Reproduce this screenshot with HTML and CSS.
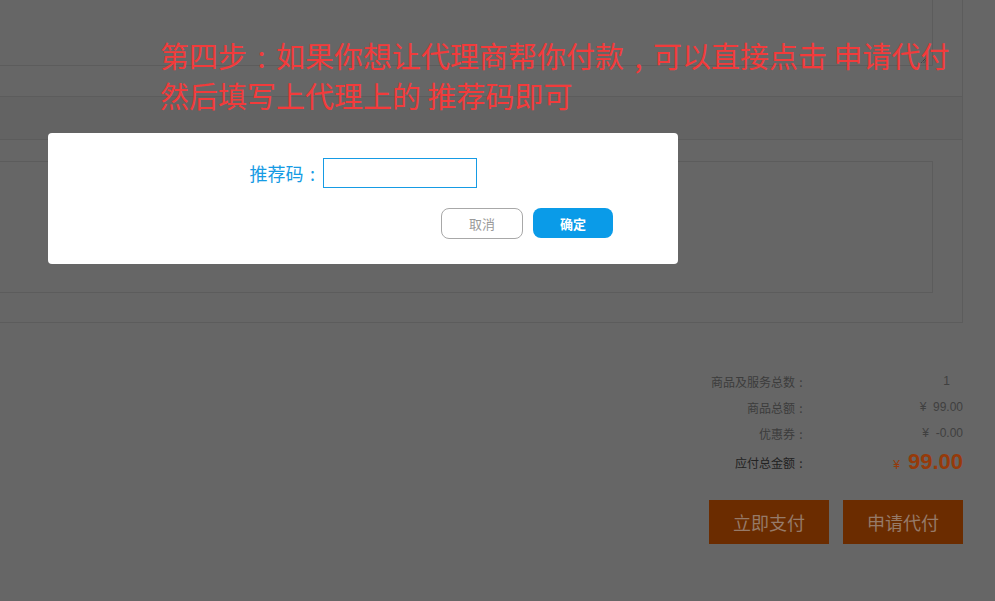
FILE: index.html
```html
<!DOCTYPE html>
<html lang="zh-CN">
<head>
<meta charset="utf-8">
<title>申请代付</title>
<link rel="stylesheet" href="styles.css">
</head>
<body>
<div class="page">
  <div class="outer">
    <div class="note-box">
      <svg class="resize" width="6" height="6" viewBox="0 0 6 6"><path d="M0.5 5.5 L5.5 0.5 M3 5.5 L5.5 3" stroke="#2a2a2a" stroke-width="1" stroke-dasharray="1 1" fill="none"/></svg>
    </div>
    <div class="band"></div>
    <div class="inner-box"></div>
  </div>
  <div class="summary">
    <div class="row"><span class="label">商品及服务总数<span class="colon">:</span></span><span class="value count">1</span></div>
    <div class="row"><span class="label">商品总额<span class="colon">:</span></span><span class="value">¥&nbsp; 99.00</span></div>
    <div class="row"><span class="label">优惠券<span class="colon">:</span></span><span class="value">¥&nbsp; -0.00</span></div>
    <div class="row total"><span class="label">应付总金额<span class="colon">:</span></span><span class="value"><span class="yen">¥</span><span class="amount">99.00</span></span></div>
  </div>
  <div class="actions">
    <button class="pay-btn">立即支付</button>
    <button class="pay-btn">申请代付</button>
  </div>
</div>

<div class="tip">
  <div class="tip-line">第四步<span class="colon">:</span>如果你想让代理商帮你付款<span class="comma">,</span>可以直接点击 申请代付</div>
  <div class="tip-line">然后填写上代理上的 推荐码即可</div>
</div>

<div class="modal">
  <div class="field">
    <label class="field-label">推荐码<span class="colon">:</span></label>
    <input class="field-input" type="text">
  </div>
  <div class="modal-actions">
    <button class="btn-cancel">取消</button>
    <button class="btn-ok">确定</button>
  </div>
</div>
</body>
</html>
```

FILE: styles.css
```css
* { box-sizing: border-box; }
html, body {
  margin: 0;
  padding: 0;
  background: #666666;
  font-family: "Noto Sans CJK SC", "Liberation Sans", sans-serif;
}
.colon,
.comma {
  display: inline-block;
  width: 1em;
  text-align: center;
}
.page {
  width: 963px;
  height: 601px;
  overflow: hidden;
}
.outer {
  width: 963px;
  height: 323px;
  border-right: 1px solid #5c5c5c;
  border-bottom: 1px solid #5c5c5c;
  display: flex;
  flex-direction: column;
}
.note-box {
  width: 933px;
  height: 66px;
  border-right: 1px solid #5c5c5c;
  border-bottom: 1px solid #5c5c5c;
  position: relative;
}
.resize {
  position: absolute;
  right: 5px;
  bottom: 2px;
}
.band {
  margin-top: 30px;
  height: 44px;
  border-top: 1px solid #5c5c5c;
  border-bottom: 1px solid #5c5c5c;
  background: #636363;
}
.inner-box {
  margin-top: 21px;
  width: 933px;
  height: 132px;
  border: 1px solid #5c5c5c;
  border-left: none;
}
.summary {
  margin-top: 45px;
  display: flex;
  flex-direction: column;
}
.row {
  display: flex;
  justify-content: flex-end;
  align-items: center;
  height: 26px;
  font-size: 12px;
  color: #3c3c3c;
}
.label {
  width: 120px;
  text-align: right;
}
.value {
  width: 156px;
  text-align: right;
  color: #404040;
  font-family: "Liberation Sans", "Noto Sans CJK SC", sans-serif;
}
.value.count { padding-right: 13px; }
.row.total {
  height: 32px;
}
.row.total .label { color: #222222; }
.yen {
  color: #963a0a;
  font-size: 12px;
  margin-right: 8px;
}
.amount {
  color: #963a0a;
  font-size: 22px;
  font-weight: bold;
}
.actions {
  margin-top: 22px;
  display: flex;
  justify-content: flex-end;
  gap: 14px;
}
.pay-btn {
  width: 120px;
  height: 44px;
  border: none;
  background: #6b2c00;
  color: #967a68;
  font-family: "Noto Sans CJK SC", sans-serif;
  font-size: 18px;
  padding: 0;
}
.tip {
  position: absolute;
  left: 160px;
  top: 35px;
  color: #f23b3b;
  font-size: 29px;
  line-height: 40px;
  white-space: nowrap;
}
.modal {
  position: absolute;
  left: 48px;
  top: 133px;
  width: 630px;
  height: 131px;
  background: #ffffff;
  border-radius: 4px;
  padding: 25px 65px 0 0;
  display: flex;
  flex-direction: column;
}
.field {
  display: flex;
  justify-content: center;
  align-items: center;
  padding-left: 65px;
  gap: 1px;
}
.field-label {
  color: #169be4;
  font-size: 18px;
  line-height: 30px;
}
.field-input {
  width: 154px;
  height: 30px;
  border: 1px solid #169be4;
  margin: 0;
  padding: 0 4px;
  outline: none;
}
.modal-actions {
  margin-top: 20px;
  display: flex;
  justify-content: flex-end;
  gap: 10px;
}
.btn-cancel {
  width: 82px;
  height: 31px;
  border: 1px solid #a8a8a8;
  border-radius: 8px;
  background: #ffffff;
  color: #9a9a9a;
  font-family: "Noto Sans CJK SC", sans-serif;
  font-size: 13px;
  padding: 0;
}
.btn-ok {
  width: 80px;
  height: 30px;
  border: none;
  border-radius: 8px;
  background: #0a9be8;
  color: #ffffff;
  font-family: "Noto Sans CJK SC", sans-serif;
  font-size: 13px;
  font-weight: bold;
  padding: 0;
}
```
